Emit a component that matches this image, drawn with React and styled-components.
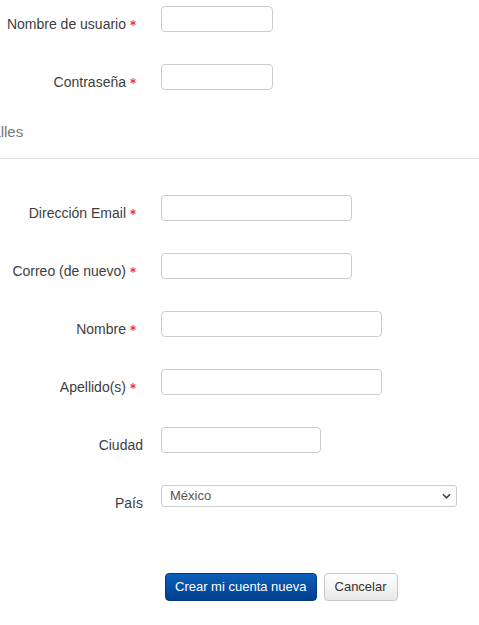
import React from 'react'
import styled, { createGlobalStyle } from 'styled-components'

const GlobalStyle = createGlobalStyle`
	body {
		margin: 0;
		overflow: hidden;
		background: #fff;
		font-family: "Liberation Sans", Arial, sans-serif;
		font-size: 14px;
		color: #333;
	}
`

const Asterisk = () => (
	<Star viewBox="0 0 10 10" aria-label="Requerido">
		<g stroke="#e8303a" strokeWidth="1.7" strokeLinecap="round">
			<line x1="5" y1="0.8" x2="5" y2="9.2" />
			<line x1="1.4" y1="2.9" x2="8.6" y2="7.1" />
			<line x1="1.4" y1="7.1" x2="8.6" y2="2.9" />
		</g>
	</Star>
)

const Chevron = () => (
	<Arrow viewBox="0 0 10 6">
		<path d="M1 1 L5 5 L9 1" fill="none" stroke="#444" strokeWidth="1.8" />
	</Arrow>
)

const Field = ({ label, required, width }) => (
	<Row>
		<Label>
			{label}
			{required && <Asterisk />}
		</Label>
		<Input type="text" $w={width} />
	</Row>
)

const App = () => {
	return (
		<Page>
			<GlobalStyle />
			<Group>
				<Field label="Nombre de usuario" required width={112} />
				<Field label="Contraseña" required width={112} />
			</Group>
			<Legend>
				<span>Más detalles</span>
			</Legend>
			<Group $top={36}>
				<Field label="Dirección Email" required width={191} />
				<Field label="Correo (de nuevo)" required width={191} />
				<Field label="Nombre" required width={221} />
				<Field label="Apellido(s)" required width={221} />
				<Field label="Ciudad" width={160} />
				<Row>
					<Label>País</Label>
					<SelectWrap>
						<Select defaultValue="MX">
							<option value="MX">México</option>
						</Select>
						<Chevron />
					</SelectWrap>
				</Row>
			</Group>
			<Actions>
				<Button $primary>Crear mi cuenta nueva</Button>
				<Button>Cancelar</Button>
			</Actions>
		</Page>
	)
}

export default App

const Page = styled.div`
	padding-top: 6px;
	width: 479px;
`

const Group = styled.div`
	display: flex;
	flex-direction: column;
	gap: 30px;
	padding-top: ${ p => p.$top || 0 }px;
`

const Row = styled.div`
	display: flex;
	align-items: flex-start;
	gap: 18px;
	height: 28px;
`

const Label = styled.label`
	width: 143px;
	flex-shrink: 0;
	padding-top: 8px;
	line-height: 20px;
	display: flex;
	justify-content: flex-end;
	align-items: center;
	white-space: nowrap;
	color: #3d3d40;
`

const Star = styled.svg`
	width: 6px;
	height: 6px;
	margin: -2px 7px 0 4px;
`

const Input = styled.input`
	box-sizing: border-box;
	width: ${ p => p.$w }px;
	height: 26px;
	margin: 0;
	border: 1px solid #ccc;
	border-radius: 4px;
	background: #fff;
	font: inherit;
	outline: none;
`

const SelectWrap = styled.div`
	position: relative;
	width: 296px;
	height: 22px;
`

const Select = styled.select`
	box-sizing: border-box;
	width: 100%;
	height: 22px;
	margin: 0;
	padding: 0 24px 2px 8px;
	border: 1px solid #ccc;
	border-radius: 3px;
	background: #fff;
	appearance: none;
	font-family: "Liberation Sans", Arial, sans-serif;
	font-size: 13px;
	color: #555;
	outline: none;
`

const Arrow = styled.svg`
	position: absolute;
	right: 6px;
	top: 8px;
	width: 9px;
	height: 6px;
	pointer-events: none;
`

const Legend = styled.div`
	margin-top: 30px;
	padding-bottom: 16px;
	border-bottom: 1px solid #dcdcdc;
	line-height: 20px;
	font-size: 15px;
	color: #777;
	white-space: nowrap;

	span {
		display: inline-block;
		margin-left: -61px;
	}
`

const Actions = styled.div`
	display: flex;
	gap: 7px;
	padding: 60px 0 0 165px;
`

const Button = styled.button`
	box-sizing: border-box;
	height: 28px;
	padding: 0 ${ p => p.$primary ? 9 : 10 }px;
	border-radius: 4px;
	font-family: "Liberation Sans", Arial, sans-serif;
	font-size: 13px;
	line-height: 20px;
	cursor: pointer;
	color: ${ p => p.$primary ? '#fff' : '#333' };
	border: 1px solid ${ p => p.$primary ? '#003a86' : '#c8c8c8' };
	background: ${ p => p.$primary
		? 'linear-gradient(to bottom, #0b5fbb, #003f8e)'
		: 'linear-gradient(to bottom, #ffffff, #e8e8e8)' };
	box-shadow: ${ p => p.$primary ? 'none' : 'inset 0 1px 0 rgba(255,255,255,.3), 0 1px 2px rgba(0,0,0,.05)' };
`
